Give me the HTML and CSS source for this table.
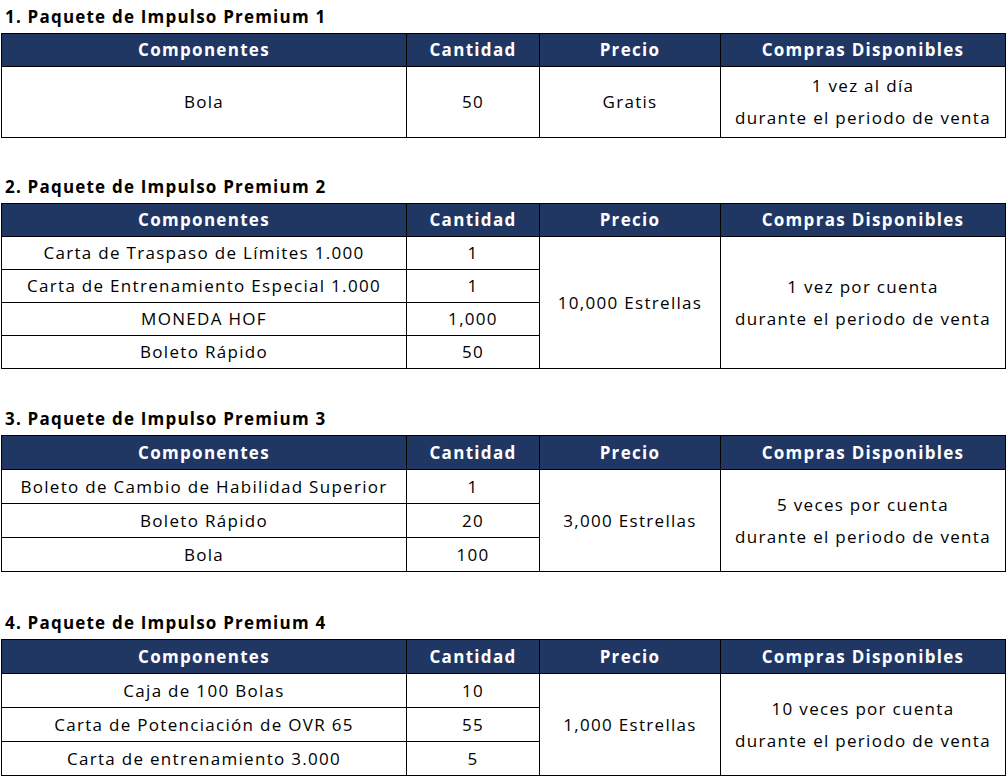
FILE: index.html
```html
<!DOCTYPE html>
<html lang="es">
<head>
<meta charset="utf-8">
<link rel="stylesheet" href="styles.css">
<title>Paquetes de Impulso Premium</title>
</head>
<body>
<section class="pack pack-1">
  <h2 class="pack-title">1. Paquete de Impulso Premium 1</h2>
  <table class="grid">
    <colgroup><col class="c1"><col class="c2"><col class="c3"><col class="c4"></colgroup>
    <thead><tr><th>Componentes</th><th>Cantidad</th><th>Precio</th><th>Compras Disponibles</th></tr></thead>
    <tbody>
      <tr class="tall"><td>Bola</td><td>50</td><td>Gratis</td><td>1 vez al día<br>durante el periodo de venta</td></tr>
    </tbody>
  </table>
</section>

<section class="pack pack-2">
  <h2 class="pack-title">2. Paquete de Impulso Premium 2</h2>
  <table class="grid">
    <colgroup><col class="c1"><col class="c2"><col class="c3"><col class="c4"></colgroup>
    <thead><tr><th>Componentes</th><th>Cantidad</th><th>Precio</th><th>Compras Disponibles</th></tr></thead>
    <tbody>
      <tr><td>Carta de Traspaso de Límites 1.000</td><td>1</td><td rowspan="4">10,000 Estrellas</td><td rowspan="4">1 vez por cuenta<br>durante el periodo de venta</td></tr>
      <tr><td>Carta de Entrenamiento Especial 1.000</td><td>1</td></tr>
      <tr><td>MONEDA HOF</td><td>1,000</td></tr>
      <tr><td>Boleto Rápido</td><td>50</td></tr>
    </tbody>
  </table>
</section>

<section class="pack pack-34">
  <h2 class="pack-title">3. Paquete de Impulso Premium 3</h2>
  <table class="grid">
    <colgroup><col class="c1"><col class="c2"><col class="c3"><col class="c4"></colgroup>
    <thead><tr><th>Componentes</th><th>Cantidad</th><th>Precio</th><th>Compras Disponibles</th></tr></thead>
    <tbody>
      <tr><td>Boleto de Cambio de Habilidad Superior</td><td>1</td><td rowspan="3">3,000 Estrellas</td><td rowspan="3">5 veces por cuenta<br>durante el periodo de venta</td></tr>
      <tr><td>Boleto Rápido</td><td>20</td></tr>
      <tr><td>Bola</td><td>100</td></tr>
    </tbody>
  </table>
</section>

<section class="pack pack-34">
  <h2 class="pack-title">4. Paquete de Impulso Premium 4</h2>
  <table class="grid">
    <colgroup><col class="c1"><col class="c2"><col class="c3"><col class="c4"></colgroup>
    <thead><tr><th>Componentes</th><th>Cantidad</th><th>Precio</th><th>Compras Disponibles</th></tr></thead>
    <tbody>
      <tr><td>Caja de 100 Bolas</td><td>10</td><td rowspan="3">1,000 Estrellas</td><td rowspan="3">10 veces por cuenta<br>durante el periodo de venta</td></tr>
      <tr><td>Carta de Potenciación de OVR 65</td><td>55</td></tr>
      <tr><td>Carta de entrenamiento 3.000</td><td>5</td></tr>
    </tbody>
  </table>
</section>
</body>
</html>
```

FILE: styles.css
```css
html, body {
  margin: 0;
  padding: 0;
  background: #ffffff;
}

body {
  font-family: "Open Sans", "Noto Sans CJK KR", sans-serif;
  font-size: 17px;
  letter-spacing: 1.3px;
  color: #000000;
  padding-left: 1px;
  width: 1005px;
}

.pack {
  display: flex;
  flex-direction: column;
}

.pack-1 { margin-bottom: 32px; }
.pack-2 { margin-bottom: 33px; }
.pack-34 { margin-bottom: 34px; }

.pack-title {
  margin: 0;
  padding-left: 4px;
  height: 33px;
  line-height: 33px;
  font-size: 17px;
  font-weight: 700;
  letter-spacing: 1.2px;
}

.grid {
  border-collapse: collapse;
  table-layout: fixed;
  width: 1004px;
}

.c1 { width: 405px; }
.c2 { width: 133px; }
.c3 { width: 181px; }
.c4 { width: 285px; }

.grid th,
.grid td {
  border: 1px solid #000000;
  text-align: center;
  vertical-align: middle;
  padding: 0;
  height: 32px;
  line-height: 32px;
}

.grid th {
  background: #203764;
  color: #ffffff;
  font-weight: 700;
}

.grid .tall td {
  height: 70px;
}

.pack-34 .grid th,
.pack-34 .grid td {
  height: 33px;
}
```
